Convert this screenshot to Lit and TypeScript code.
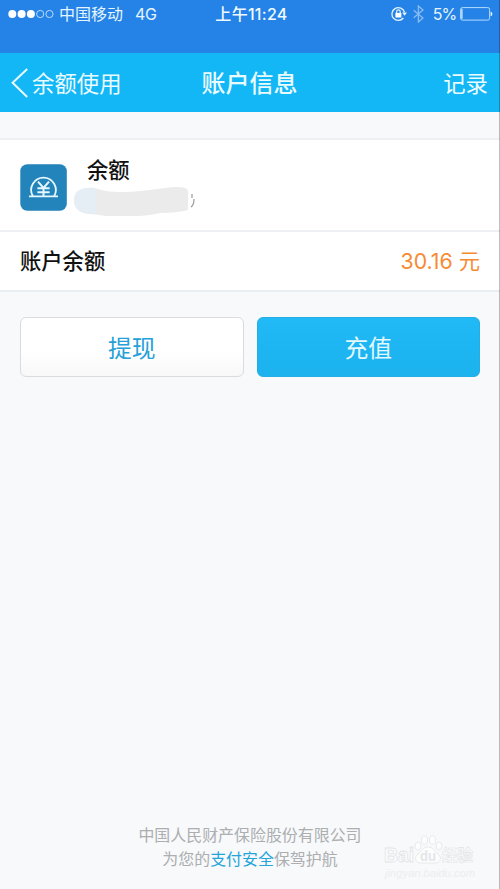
import { LitElement, html, css, svg } from "lit";
import { customElement } from "lit/decorators.js";

const base = css`
  * { box-sizing: border-box; }
  :host { display: block; box-sizing: border-box; }
  svg { display: block; }
`;

@customElement("status-bar")
class StatusBar extends LitElement {
  static styles = [base, css`
    :host { height: 53px; background: #2582e6; color: #e4f5ff; }
    .bar { display: grid; grid-template-columns: 1fr auto 1fr; align-items: center; height: 28px; padding: 0 7px 0 8px; font-size: 16px; line-height: 20px; }
    .side { display: flex; align-items: center; }
    .right { justify-content: flex-end; }
    .carrier { margin-left: 5px; }
    .net { margin-left: 12px; letter-spacing: -.4px; }
    .time { font-weight: 500; color: #effaff; font-size: 16px; letter-spacing: .3px; padding-left: 2px; }
    .lock { margin-right: 6px; }
    .bt { margin-right: 9px; opacity: .5; }
    .pct { margin-right: 4px; letter-spacing: -1.1px; }
  `];
  render() {
    return html`<div class="bar">
      <div class="side">
        <svg width="46" height="10" viewBox="0 0 46 10">
          ${[0, 1, 2, 3, 4].map(i => svg`<circle cx=${4.3 + i * 9.3} cy="5" r=${i < 3 ? 4 : 3.6} fill=${i < 3 ? "#fff" : "none"} stroke=${i < 3 ? "none" : "#c8e4ff"} stroke-width=".9"/>`)}
        </svg>
        <span class="carrier">中国移动</span><span class="net">4G</span>
      </div>
      <span class="time">上午11:24</span>
      <div class="side right">
        <svg class="lock" width="16" height="16" viewBox="0 0 16 16" fill="none" stroke="#e4f5ff">
          <path d="M13.5 6.2A6.4 6.4 0 1 0 12.4 12" stroke-width="1.3"/>
          <path d="M11.1 6.6H16L13.6 9.8Z" fill="#e4f5ff" stroke="none"/>
          <rect x="4.4" y="6.9" width="6" height="4.6" fill="#fff" stroke="none"/>
          <path d="M5.6 7V5.7a1.8 1.8 0 0 1 3.6 0V7" stroke-width="1.2"/>
        </svg>
        <svg class="bt" width="11" height="18" viewBox="0 0 11 18" fill="none" stroke="#e4f5ff" stroke-width="1.4">
          <path d="M.7 5.2L10 13 5.4 17V1L10 5 .7 12.8"/>
        </svg>
        <span class="pct">5%</span>
        <svg width="33" height="14" viewBox="0 0 33 14">
          <rect x=".6" y=".6" width="29" height="12.5" rx="1.8" fill="none" stroke="#b4dcfb"/>
          <rect x="1.3" y="1.8" width="1.2" height="10" fill="#e4f5ff"/>
          <path d="M30.6 4.6q1.8.6 1.8 2.3t-1.8 2.3z" fill="#e4f5ff"/>
        </svg>
      </div>
    </div>`;
  }
}

@customElement("nav-bar")
class NavBar extends LitElement {
  static styles = [base, css`
    :host { display: grid; grid-template-columns: 1fr auto 1fr; align-items: center; height: 59px; padding: 2px 12px 0 11px; background: #14b7f6; color: #e9fbff; font-size: 22.4px; line-height: 30px; }
    .back { display: flex; align-items: center; gap: 4px; }
    .back svg { margin-top: -1px; }
    .title { font-size: 24px; font-weight: 500; }
    .action { text-align: right; }
  `];
  render() {
    return html`
      <div class="back">
        <svg width="17" height="30" viewBox="0 0 17 30" fill="none" stroke="#e9fbff" stroke-width="2"><path d="M16.2 1L1.6 14.8 16.2 29"/></svg>
        <span>余额使用</span>
      </div>
      <span class="title">账户信息</span>
      <span class="action">记录</span>`;
  }
}

@customElement("balance-panel")
class BalancePanel extends LitElement {
  static styles = [base, css`
    :host { margin-top: 26px; background: #fff; border-top: 2px solid #eef0f3; border-bottom: 2px solid #eaedf1; color: #111; font-size: 21.3px; line-height: 28px; }
    .head { display: flex; height: 92px; padding: 24px 20px 0; border-bottom: 2px solid #eeeff2; }
    .info { margin-left: 6px; }
    .name { margin: -8px 0 0 13px; font-weight: 500; }
    .row { display: flex; align-items: center; justify-content: space-between; height: 58px; padding: 0 20px; }
    .label { font-weight: 500; }
    .amount { color: #f68a33; }
  `];
  render() {
    return html`
      <div class="head">
        <svg width="48" height="48" viewBox="0 0 48 48">
          <rect x=".3" y=".3" width="46.5" height="46.5" rx="7" fill="#2383bb"/>
          <g fill="none" stroke="#e6f8ff" stroke-width="1.8">
            <path d="M9 32.3H38M12.8 32A12.3 12.3 0 1 1 34.2 32"/>
            <path d="M18 17.6l5.5 6.3 5.5-6.3M17.4 24.3h12.2M17.4 28.2h12.2M23.5 24v8.2" stroke-width="2"/>
          </g>
        </svg>
        <div class="info">
          <div class="name">余额</div>
          <svg width="124" height="32" viewBox="0 0 124 32">
            <path d="M13 4C25 3 25 8 44 8S75 6 91 4q13-2 20 0 4 1 3 7v15q-10 3-28 3-16 4-50 4-8-2-21-3Q1 29 0 17 0 5 13 4Z" fill="#ebebec"/>
            <path d="M13 4q8-1 9 1v24q-3 1-7 0Q1 29 0 17 0 5 13 4Z" fill="#e5edf5"/>
            <path d="M118 10v4M120 15q0 6-3 8" fill="none" stroke="#999" stroke-width="1.2"/>
          </svg>
        </div>
      </div>
      <div class="row"><span class="label">账户余额</span><span class="amount">30.16 元</span></div>`;
  }
}

@customElement("action-buttons")
class ActionButtons extends LitElement {
  static styles = [base, css`
    :host { display: flex; gap: 13px; padding: 25px 20px 0; }
    button { flex: 1; height: 60px; padding: 3px 0 0; border-radius: 6px; font: inherit; font-size: 23.8px; line-height: 30px; }
    .plain { border: 1px solid #d9dbde; color: #25a0d8; background: linear-gradient(#fff 55%, #f8f8f9); }
    .primary { border: 1px solid #24afe4; color: #e3f9ff; background: linear-gradient(#21baf6, #1bb2ee); }
  `];
  render() {
    return html`<button class="plain">提现</button><button class="primary">充值</button>`;
  }
}

@customElement("page-footer")
class PageFooter extends LitElement {
  static styles = [base, css`
    :host { margin-top: auto; padding-bottom: 17px; text-align: center; color: #acaeb0; font-size: 15.95px; line-height: 24px; }
    .link { color: #25a4da; }
    .mark { position: absolute; right: 18px; bottom: 6px; }
    .brand { font: bold 21px "Liberation Sans", sans-serif; }
    .du { font: bold 15px "Liberation Sans", sans-serif; }
    .cn { font: bold 16px "Noto Sans CJK SC", sans-serif; }
    .url { font: italic 10px "Liberation Sans", sans-serif; }
  `];
  render() {
    return html`
      <div>中国人民财产保险股份有限公司</div>
      <div>为您的<span class="link">支付安全</span>保驾护航</div>
      <svg class="mark" width="100" height="50" viewBox="0 0 100 50" fill="#fdfdfe" stroke="#e2e4e6" stroke-width=".8">
        <text class="brand" x="2" y="29" textLength="30" lengthAdjust="spacingAndGlyphs">Bai</text>
        <path d="M46 14c5 0 6 4 10 7 4 3 3 9-3 9H39c-6 0-7-6-3-9 4-3 5-7 10-7Z"/>
        <ellipse cx="36" cy="13" rx="3" ry="4"/><ellipse cx="42.5" cy="7" rx="3" ry="4.2"/>
        <ellipse cx="50.5" cy="7" rx="3" ry="4.2"/><ellipse cx="57" cy="13" rx="3" ry="4"/>
        <text x="38" y="28" class="du" textLength="16" lengthAdjust="spacingAndGlyphs" fill="#e4e6e8" stroke="none">du</text>
        <text class="cn" x="60" y="28" textLength="31" lengthAdjust="spacingAndGlyphs" stroke-width=".6">经验</text>
        <text class="url" x="3" y="43.5" textLength="90" lengthAdjust="spacingAndGlyphs" stroke="none" fill="#eceef0">jingyan.baidu.com</text>
      </svg>`;
  }
}

@customElement("app-root")
class AppRoot extends LitElement {
  static styles = [base, css`
    :host { position: relative; display: flex; flex-direction: column; height: 889px; overflow: hidden; background: #f7f9fb; font-family: Inter, "Noto Sans CJK SC", sans-serif; }
    .edge { position: absolute; right: 0; top: 0; bottom: 0; width: 1px; background: rgba(0, 0, 0, .25); }
  `];
  render() {
    return html`
      <status-bar></status-bar>
      <nav-bar></nav-bar>
      <balance-panel></balance-panel>
      <action-buttons></action-buttons>
      <page-footer></page-footer>
      <div class="edge"></div>`;
  }
}
